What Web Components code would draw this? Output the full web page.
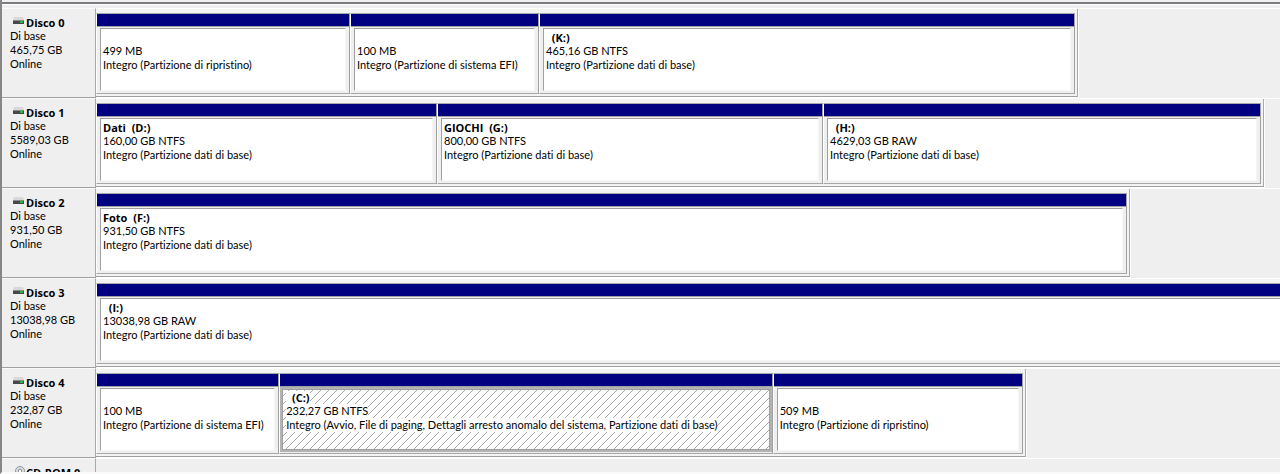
<!DOCTYPE html>
<html lang="it">
<head>
<meta charset="utf-8">
<title>Gestione disco</title>
<style>
  body {
    margin: 0;
    background: #efefef;
    color: #000;
    font: 11px/14px Lato, "Noto Sans", sans-serif;
    font-variant-ligatures: none;
  }
</style>
</head>
<body>
<disk-view>
  <disk-row name="Disco 0" size="465,75 GB" span="982">
    <disk-partition share="254" size="499 MB" status="Integro (Partizione di ripristino)"></disk-partition>
    <disk-partition share="189" size="100 MB" status="Integro (Partizione di sistema EFI)"></disk-partition>
    <disk-partition share="536" drive="  (K:)" size="465,16 GB NTFS" status="Integro (Partizione dati di base)"></disk-partition>
  </disk-row>
  <disk-row name="Disco 1" size="5589,03 GB" span="1168">
    <disk-partition share="341" drive="Dati  (D:)" size="160,00 GB NTFS" status="Integro (Partizione dati di base)"></disk-partition>
    <disk-partition share="386" drive="GIOCHI  (G:)" size="800,00 GB NTFS" status="Integro (Partizione dati di base)"></disk-partition>
    <disk-partition share="438" drive="  (H:)" size="4629,03 GB RAW" status="Integro (Partizione dati di base)"></disk-partition>
  </disk-row>
  <disk-row name="Disco 2" size="931,50 GB" span="1034">
    <disk-partition share="1" drive="Foto  (F:)" size="931,50 GB NTFS" status="Integro (Partizione dati di base)"></disk-partition>
  </disk-row>
  <disk-row name="Disco 3" size="13038,98 GB" span="1240">
    <disk-partition share="1" drive="  (I:)" size="13038,98 GB RAW" status="Integro (Partizione dati di base)"></disk-partition>
  </disk-row>
  <disk-row name="Disco 4" size="232,87 GB" span="930">
    <disk-partition share="183" size="100 MB" status="Integro (Partizione di sistema EFI)"></disk-partition>
    <disk-partition share="493" selected drive="  (C:)" size="232,27 GB NTFS" status="Integro (Avvio, File di paging, Dettagli arresto anomalo del sistema, Partizione dati di base)"></disk-partition>
    <disk-partition share="250" size="509 MB" status="Integro (Partizione di ripristino)"></disk-partition>
  </disk-row>
  <disk-row name="CD-ROM 0" kind="cd"></disk-row>
</disk-view>

<script>
(function () {
  // Width in units of the whole graph area; a disk's span is measured against it.
  const GRAPH_UNITS = 1184;

  const ICONS = {
    disk: `<svg width="14" height="12" viewBox="0 0 14 12" aria-hidden="true">
      <path d="M3 1h9l1 3H2z" fill="#d8d8da"/>
      <path d="M2 4h11v4H2z" fill="#48484a"/>
      <path d="M2 4h11v1H2z" fill="#8a8a8c"/>
      <path d="M9 5h3v2H9z" fill="#28b848"/>
    </svg>`,
    cd: `<svg width="14" height="12" viewBox="0 0 14 12" aria-hidden="true">
      <path d="M2 6h10l1 6H0z" fill="#c9c9cb"/>
      <circle cx="9" cy="5" r="4.5" fill="#dcdfe2" stroke="#92969a"/>
      <circle cx="9" cy="5" r="1.8" fill="#f6f6f6" stroke="#8a8e92"/>
    </svg>`
  };

  const viewTemplate = document.createElement('template');
  viewTemplate.innerHTML = `
    <style>
      :host {
        display: block;
        box-sizing: border-box;
        height: 100vh;
        overflow: hidden;
        border-left: 2px solid #868686;
        border-bottom: 2px solid #fafafa;
      }
      .edge {
        height: 2px;
        margin: 2px 0 0;
        background: #7c7c80;
        border-bottom: 1px solid #fff;
      }
      .rows { padding-top: 3px; }
    </style>
    <div class="edge"></div>
    <div class="rows"><slot></slot></div>
  `;

  class DiskView extends HTMLElement {
    constructor() {
      super();
      this.attachShadow({ mode: 'open' });
      this.shadowRoot.appendChild(viewTemplate.content.cloneNode(true));
    }
  }

  const rowTemplate = document.createElement('template');
  rowTemplate.innerHTML = `
    <style>
      :host {
        display: flex;
        height: 90px;
        overflow: hidden;
      }
      .label {
        flex: 0 0 94px;
        box-sizing: border-box;
        padding: 7px 0 0 8px;
        border-top: 1px solid #fafafa;
        border-right: 1px solid #a8a8a8;
        border-bottom: 1px solid #a0a0a0;
        white-space: nowrap;
      }
      .name {
        display: flex;
        gap: 1px;
        height: 13px;
        margin: 0;
        padding-left: 1px;
        font: 700 11px/13px "Open Sans", "Noto Sans", sans-serif;
      }
      svg { display: block; }
      p { margin: 0; }
      .graph {
        flex: 1;
        min-width: 0;
        border-top: 1px solid #fff;
      }
      .disk {
        display: grid;
        box-sizing: border-box;
        height: 88px;
        padding: 4px 2px 2px 0;
        border-right: 1px solid #a8a8a8;
        border-bottom: 1px solid #a0a0a0;
        box-shadow: 1px 1px #fff;
        background: #f3f3f3;
      }
    </style>
    <div class="label">
      <h2 class="name"><span class="icon"></span><span class="title"></span></h2>
    </div>
    <div class="graph"></div>
  `;

  class DiskRow extends HTMLElement {
    constructor() {
      super();
      this.attachShadow({ mode: 'open' });
      this.shadowRoot.appendChild(rowTemplate.content.cloneNode(true));
    }

    connectedCallback() {
      const root = this.shadowRoot;
      const kind = this.getAttribute('kind') || 'disk';
      root.querySelector('.icon').innerHTML = ICONS[kind];
      root.querySelector('.title').textContent = this.getAttribute('name');
      if (kind === 'cd') return;

      ['Di base', this.getAttribute('size'), 'Online'].forEach((text) => {
        const line = document.createElement('p');
        line.textContent = text;
        root.querySelector('.label').appendChild(line);
      });

      const disk = document.createElement('div');
      disk.className = 'disk';
      disk.style.width = (this.getAttribute('span') / GRAPH_UNITS * 100) + '%';
      disk.style.gridTemplateColumns = Array.from(this.children)
        .map((part) => `minmax(0, ${part.getAttribute('share')}fr)`)
        .join(' ');
      disk.appendChild(document.createElement('slot'));
      root.querySelector('.graph').appendChild(disk);
    }
  }

  const partitionTemplate = document.createElement('template');
  partitionTemplate.innerHTML = `
    <style>
      :host {
        display: flex;
        flex-direction: column;
        box-sizing: border-box;
        border-top: 1px solid #a8a8a8;
        border-left: 1px solid #fff;
        border-right: 1px solid #a0a0a0;
        border-bottom: 1px solid #a8a8a8;
        background: #efefef;
      }
      .stripe {
        height: 12px;
        background: #000080;
        border-bottom: 1px solid #a0a0a0;
      }
      .body {
        flex: 1;
        box-sizing: border-box;
        margin: 1px 3px 2px;
        padding: 2px 0 0 2px;
        border: 1px solid #a0a0a0;
        border-right-color: #f6f6f6;
        border-bottom-color: #f6f6f6;
        background: #fff;
        overflow: hidden;
      }
      :host([selected]) .body {
        margin: 0 0 1px;
        padding: 2px 0 0 4px;
        border: 2px solid #b4b4b4;
        outline: 1px solid #a0a0a0;
        outline-offset: -3px;
        background: #fff linear-gradient(135deg, transparent 44%, #a8a8a8 44% 56%, transparent 56%) 0 0 / 8px 8px;
      }
      p {
        width: fit-content;
        margin: 0;
        white-space: pre;
        background: #fff;
      }
      .drive {
        min-height: 13px;
        font: 700 11px/13px "Open Sans", "Noto Sans", sans-serif;
      }
    </style>
    <div class="stripe"></div>
    <div class="body">
      <p class="drive"></p>
      <p class="size"></p>
      <p class="status"></p>
    </div>
  `;

  class DiskPartition extends HTMLElement {
    constructor() {
      super();
      this.attachShadow({ mode: 'open' });
      this.shadowRoot.appendChild(partitionTemplate.content.cloneNode(true));
    }

    connectedCallback() {
      ['drive', 'size', 'status'].forEach((key) => {
        this.shadowRoot.querySelector('.' + key).textContent = this.getAttribute(key) || '';
      });
    }
  }

  customElements.define('disk-view', DiskView);
  customElements.define('disk-row', DiskRow);
  customElements.define('disk-partition', DiskPartition);
})();
</script>
</body>
</html>
